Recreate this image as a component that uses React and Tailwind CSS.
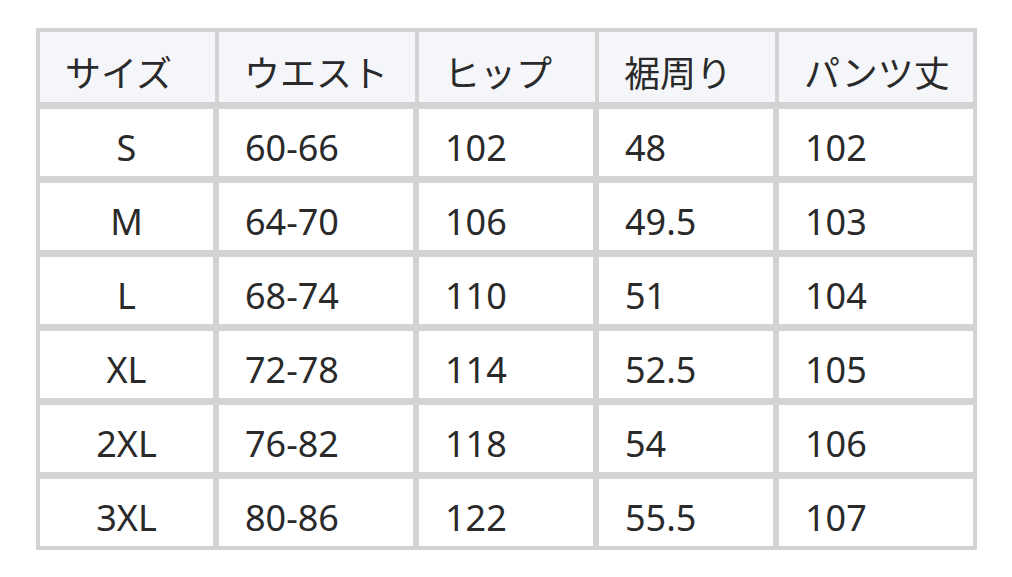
import React from "react";

const headers = ["サイズ", "ウエスト", "ヒップ", "裾周り", "パンツ丈"];

const rows = [
  ["S", "60-66", "102", "48", "102"],
  ["M", "64-70", "106", "49.5", "103"],
  ["L", "68-74", "110", "51", "104"],
  ["XL", "72-78", "114", "52.5", "105"],
  ["2XL", "76-82", "118", "54", "106"],
  ["3XL", "80-86", "122", "55.5", "107"],
];

function App() {
  return (
    <div
      className="w-[1012px] h-[577px] bg-white pt-[28px] pl-[36px] text-[#2a2a2a]"
      style={{ fontFamily: '"Noto Sans", "Noto Sans CJK JP", sans-serif' }}
    >
      <div className="w-[941px] bg-[#d3d3d3] p-1 flex flex-col gap-[7px]">
        {/* header */}
        <div className="grid grid-cols-[175px_196px_176px_176px_194px] gap-x-1">
          {headers.map((h, i) => (
            <div
              key={i}
              className="h-[70px] bg-[#f5f6fa] flex items-center pt-[13px] pl-[25px] text-[36px] leading-none"
            >
              {h}
            </div>
          ))}
        </div>

        {/* body */}
        {rows.map((row, r) => (
          <div
            key={r}
            className="grid grid-cols-[175px_196px_176px_176px_194px] gap-x-1"
          >
            {row.map((cell, c) => (
              <div
                key={c}
                className={
                  "h-[67px] bg-white flex items-center pt-[11px] text-[36px] leading-none border-[#d3d3d3] " +
                  (c === 0 ? "justify-center border-r-2 " : "pl-[26px] ") +
                  (c > 0 && c < 4 ? "border-r-2" : "")
                }
              >
                {cell}
              </div>
            ))}
          </div>
        ))}
      </div>
    </div>
  );
}

export default App;
